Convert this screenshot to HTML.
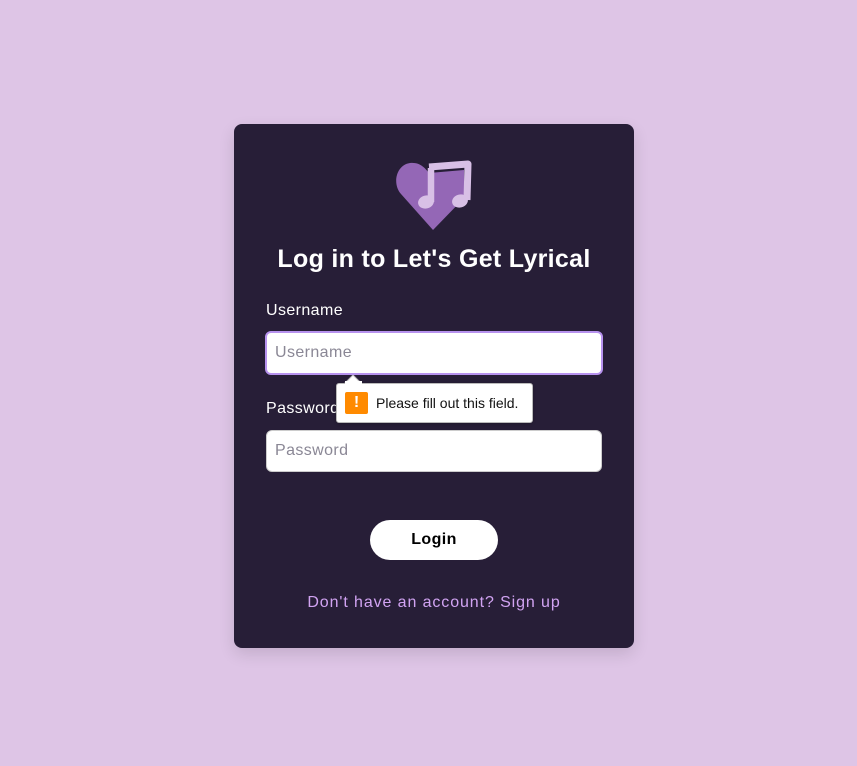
<!DOCTYPE html>
<html><head><style>
body{margin:0;width:857px;height:766px;background:#dec5e6;font-family:"Liberation Sans",sans-serif;position:relative;overflow:hidden}
.card{position:absolute;left:234px;top:124px;width:400px;height:524px;background:#271e37;border-radius:8px;box-shadow:0 6px 16px rgba(0,0,0,.12)}
.abs{position:absolute}
h1{position:absolute;left:0;width:400px;top:121px;margin:0;text-align:center;color:#fff;font-size:25px;font-weight:bold;letter-spacing:0.3px}
.lbl{position:absolute;left:32px;color:#fff;font-size:16px;letter-spacing:0.4px}
.in{position:absolute;background:#fff;border-radius:6px;box-sizing:border-box;color:#8a8795;font-size:16px;padding-left:8px;display:flex;align-items:center;letter-spacing:0.4px}
.btn{position:absolute;left:136px;top:396px;width:128px;height:40px;background:#fff;border-radius:20px;text-align:center;line-height:40px;font-weight:bold;font-size:16px;color:#000;letter-spacing:0.4px}
.link{position:absolute;left:0;width:400px;top:470px;text-align:center;color:#d1a3f2;font-size:16px;letter-spacing:0.9px}
.tip{position:absolute;left:336px;top:383px;width:197px;height:40px;background:#fff;border:1px solid #bbb;border-radius:3px;box-sizing:border-box;box-shadow:0 1px 3px rgba(0,0,0,.2);font-size:14px;color:#111}
</style></head><body>
<div class="card">
<svg class="abs" style="left:160px;top:36px" width="80" height="72" viewBox="0 0 80 72">
<path d="M39 70 L7 34 C-2 24 2 5 16 3 C26 2 31 8 35 13 L70 10 L70 38 Z" fill="#9467b6"/>
<path d="M35 7 L74 4 L73 40" fill="none" stroke="#d8c0e6" stroke-width="7" stroke-linejoin="round"/>
<path d="M37 8 L37 42" stroke="#d8c0e6" stroke-width="6.5"/>
<ellipse cx="32" cy="42" rx="8" ry="6.5" fill="#d8c0e6" transform="rotate(-15 32 42)"/>
<ellipse cx="66" cy="41" rx="8" ry="6.5" fill="#d8c0e6" transform="rotate(-15 66 41)"/>
</svg>
<h1>Log in to Let's Get Lyrical</h1>
<div class="lbl" style="top:178px">Username</div>
<div class="in" style="left:31px;top:207px;width:338px;height:44px;border:2px solid #b792ee">Username</div>
<div class="lbl" style="top:276px">Password</div>
<div class="in" style="left:32px;top:306px;width:336px;height:42px;border:1px solid #ccc">Password</div>
<div class="btn">Login</div>
<div class="link">Don't have an account? Sign up</div>
</div>
<svg class="abs" style="left:344px;top:375px" width="20" height="10"><path d="M0 9 L9 0 L18 9" fill="#fff" stroke="#bbb"/></svg>
<div class="tip"><div class="abs" style="left:8px;top:8px;width:23px;height:22px;background:#ff8a00;border-radius:2px;color:#fff;font-weight:bold;text-align:center;line-height:22px;font-size:16px">!</div><div class="abs" style="left:39px;top:11px">Please fill out this field.</div></div>
<svg class="abs" style="left:345px;top:381px" width="17" height="4"><rect width="17" height="4" fill="#fff"/></svg>
</body></html>
